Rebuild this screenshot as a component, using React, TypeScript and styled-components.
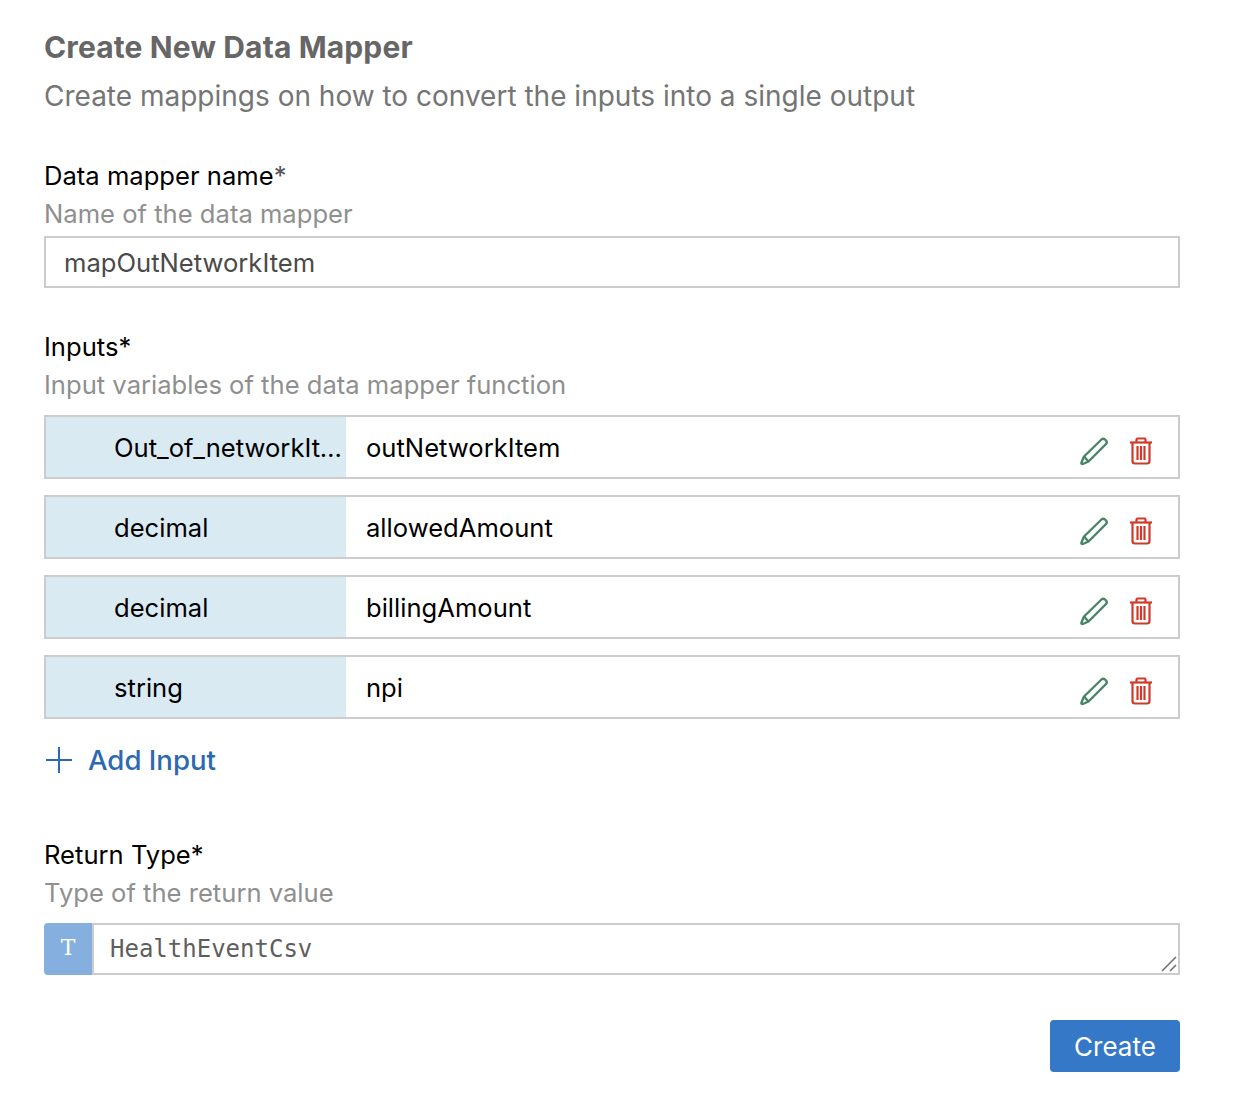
import React from "react";
import styled, { createGlobalStyle } from "styled-components";

const inputs = [
  { type: "Out_of_networkItem", name: "outNetworkItem" },
  { type: "decimal", name: "allowedAmount" },
  { type: "decimal", name: "billingAmount" },
  { type: "string", name: "npi" },
];

const PencilIcon = () => (
  <svg width="30" height="30" viewBox="0 0 30 30" fill="none" stroke="#478568" strokeWidth="2.4" strokeLinejoin="round">
    <path d="M2.5 26.5 L5 20.5 L22.5 3.5 Q24 2 26 3.5 L27 4.5 Q28.5 6.5 27 8 L9.5 25.5 L3.8 28 Q2 28 2.5 26.5 Z" />
    <path d="M5 20.5 L9.5 25.5" />
  </svg>
);

const TrashIcon = () => (
  <svg width="24" height="28" viewBox="0 0 24 28" fill="none" stroke="#d03a2b" strokeWidth="2.2">
    <path d="M1 5.5 H23" />
    <path d="M7.5 5 V2.5 Q7.5 1.5 8.5 1.5 H15.5 Q16.5 1.5 16.5 2.5 V5" />
    <path d="M3.5 6 V24 Q3.5 26.5 6 26.5 H18 Q20.5 26.5 20.5 24 V6" />
    <path d="M8.5 9 V23 M12 9 V23 M15.5 9 V23" />
  </svg>
);

const App = () => {
  return (
    <Page>
      <GlobalStyle />
      <Title>Create New Data Mapper</Title>
      <Subtitle>Create mappings on how to convert the inputs into a single output</Subtitle>

      <NameField>
        <Label>
          Data mapper name<Star>*</Star>
        </Label>
        <Hint>Name of the data mapper</Hint>
        <TextBox>mapOutNetworkItem</TextBox>
      </NameField>

      <InputsField>
        <Label>Inputs*</Label>
        <Hint $gap={13}>Input variables of the data mapper function</Hint>
        <Rows>
          {inputs.map((item, idx) => (
            <Row key={idx}>
              <TypeCell>
                <TypeText>{item.type}</TypeText>
              </TypeCell>
              <NameCell>{item.name}</NameCell>
              <Actions>
                <PencilIcon />
                <TrashIcon />
              </Actions>
            </Row>
          ))}
        </Rows>
        <AddInput>
          <svg width="28" height="28" viewBox="0 0 28 28" stroke="#2d69b1" strokeWidth="2">
            <path d="M14 1 V27 M1 14 H27" />
          </svg>
          Add Input
        </AddInput>
      </InputsField>

      <ReturnField>
        <Label>Return Type*</Label>
        <Hint $gap={13}>Type of the return value</Hint>
        <ReturnBox>
          <TypeBadge>T</TypeBadge>
          <ReturnText>
            HealthEventCsv
            <ResizeGrip width="18" height="18" viewBox="0 0 18 18" stroke="#6e6e6e" strokeWidth="1.5">
              <path d="M2 16 L16 2 M10 16 L16 10" />
            </ResizeGrip>
          </ReturnText>
        </ReturnBox>
      </ReturnField>

      <Footer>
        <CreateButton>Create</CreateButton>
      </Footer>
    </Page>
  );
};

const GlobalStyle = createGlobalStyle`
  html, body {
    margin: 0;
    background: #ffffff;
  }
  * {
    box-sizing: border-box;
  }
`;

const Page = styled.div`
  width: 1238px;
  height: 1106px;
  padding: 29px 58px 0 44px;
  font-family: Inter, "Liberation Sans", sans-serif;
  color: #000000;
  overflow: hidden;
`;

const Title = styled.h1`
  margin: 0;
  font-size: 30px;
  line-height: 36px;
  font-weight: 700;
  letter-spacing: 0.13px;
  color: #666666;
`;

const Subtitle = styled.p`
  margin: 13px 0 0;
  font-size: 28px;
  line-height: 36px;
  font-weight: 400;
  color: #757575;
`;

const NameField = styled.div`
  margin-top: 45px;
`;

const InputsField = styled.div`
  margin-top: 42px;
`;

const ReturnField = styled.div`
  margin-top: 61px;
`;

const Label = styled.div`
  font-size: 25.6px;
  line-height: 34px;
  color: #000000;
`;

const Star = styled.span`
  color: #555555;
`;

const Hint = styled.div<{ $gap?: number }>`
  margin-top: 4px;
  margin-bottom: ${(p) => p.$gap ?? 5}px;
  font-size: 25.6px;
  line-height: 34px;
  color: #8f8f8f;
`;

const TextBox = styled.div`
  height: 52px;
  padding: 0 18px;
  border: 2px solid #cccccc;
  font-size: 25.6px;
  line-height: 50px;
  color: #4a4a4a;
`;

const Rows = styled.div`
  display: flex;
  flex-direction: column;
  gap: 16px;
`;

const Row = styled.div`
  display: flex;
  align-items: center;
  height: 64px;
  border: 2px solid #cccccc;
  font-size: 25.6px;
`;

const TypeCell = styled.div`
  display: flex;
  align-items: center;
  width: 300px;
  height: 100%;
  padding-left: 68px;
  background: #daeaf2;
`;

const TypeText = styled.span`
  overflow: hidden;
  white-space: nowrap;
  text-overflow: ellipsis;
`;

const NameCell = styled.div`
  flex: 1;
  padding-left: 20px;
`;

const Actions = styled.div`
  display: flex;
  align-items: center;
  gap: 20px;
  margin-top: 8px;
  padding-right: 25px;
`;

const AddInput = styled.div`
  display: flex;
  align-items: center;
  gap: 15px;
  margin-top: 24px;
  padding-left: 1px;
  font-size: 27.6px;
  line-height: 34px;
  font-weight: 500;
  color: #2d69b1;
`;

const ReturnBox = styled.div`
  display: flex;
  height: 52px;
`;

const TypeBadge = styled.div`
  width: 48px;
  flex: none;
  display: flex;
  align-items: center;
  justify-content: center;
  padding-bottom: 4px;
  border-radius: 4px 0 0 4px;
  background: #85afde;
  color: #ffffff;
  font-family: "DejaVu Serif", serif;
  font-size: 22px;
`;

const ReturnText = styled.div`
  position: relative;
  flex: 1;
  padding-left: 16px;
  border: 2px solid #cccccc;
  font-family: "DejaVu Sans Mono", monospace;
  font-size: 24px;
  line-height: 48px;
  color: #5e5e5e;
`;

const ResizeGrip = styled.svg`
  position: absolute;
  right: 0;
  bottom: 0;
`;

const Footer = styled.div`
  display: flex;
  justify-content: flex-end;
  margin-top: 45px;
`;

const CreateButton = styled.button`
  width: 130px;
  height: 52px;
  padding: 0;
  border: none;
  border-radius: 4px;
  background: #3578c7;
  color: #ffffff;
  font-family: inherit;
  font-size: 26px;
  font-weight: 400;
`;

export default App;
